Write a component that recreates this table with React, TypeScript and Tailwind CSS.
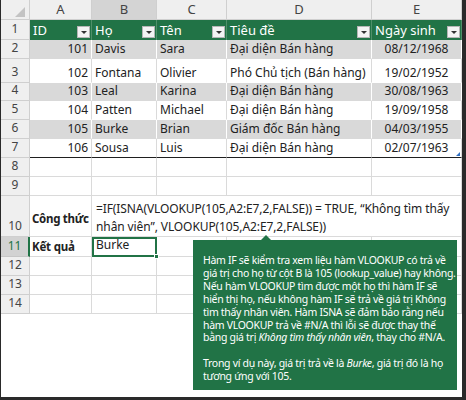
import React from 'react';

const COLS = ['w-[62px]', 'w-[65px]', 'w-[70px]', 'w-[145px]', 'w-[90px]'];
const LETTERS = ['A', 'B', 'C', 'D', 'E'];

const rows = [
  { n: 2, id: '101', ho: 'Davis', ten: 'Sara', td: 'Đại diện Bán hàng', ns: '08/12/1968', h: 'h-[19px]' },
  { n: 3, id: '102', ho: 'Fontana', ten: 'Olivier', td: 'Phó Chủ tịch (Bán hàng)', ns: '19/02/1952', h: 'h-[24px]' },
  { n: 4, id: '103', ho: 'Leal', ten: 'Karina', td: 'Đại diện Bán hàng', ns: '30/08/1963', h: 'h-[18px]' },
  { n: 5, id: '104', ho: 'Patten', ten: 'Michael', td: 'Đại diện Bán hàng', ns: '19/09/1958', h: 'h-[19px]' },
  { n: 6, id: '105', ho: 'Burke', ten: 'Brian', td: 'Giám đốc Bán hàng', ns: '04/03/1955', h: 'h-[19px]' },
  { n: 7, id: '106', ho: 'Sousa', ten: 'Luis', td: 'Đại diện Bán hàng', ns: '02/07/1963', h: 'h-[19px]' },
];

function RowHead({ n, h, active }: { n: number; h: string; active?: boolean }) {
  return (
    <div
      className={
        active
          ? `${h} w-[29px] shrink-0 flex items-end justify-center pb-[1px] bg-[#d2d2d2] text-[#217346] border-b border-[#c6c6c6] border-r-2 border-r-[#217346]`
          : `${h} w-[29px] shrink-0 flex items-end justify-center pb-[1px] bg-[#efefef] text-[#444] border-b border-r border-[#cfcfcf]`
      }
    >
      {n}
    </div>
  );
}

function Dropdown() {
  return (
    <span className="absolute right-[1px] top-[6px] w-[13px] h-[12px] bg-[#f3f3f3] border border-[#b5b5b5] flex items-center justify-center">
      <span className="w-0 h-0 border-l-[3px] border-r-[3px] border-t-[3px] border-l-transparent border-r-transparent border-t-[#333]" />
    </span>
  );
}

function EmptyRow({ n }: { n: number }) {
  return (
    <div className="flex h-[19px]">
      <RowHead n={n} h="h-[19px]" />
      {COLS.map((w, i) => (
        <div key={i} className={`${w} shrink-0 border-r border-b border-[#dadada]`} />
      ))}
    </div>
  );
}

export default function App() {
  return (
    <div className="relative w-[466px] h-[400px] bg-white border-l border-r-4 border-b-[3px] border-[#2a2a2a] overflow-hidden font-['Noto_Sans',sans-serif] text-[12px] text-[#222]">
      {/* column letters */}
      <div className="flex h-[20px]">
        <div className="relative w-[29px] shrink-0 bg-[#efefef] border-r border-b border-[#cfcfcf]">
          <span className="absolute right-[4px] bottom-[2px] w-0 h-0 border-l-[10px] border-b-[10px] border-l-transparent border-b-[#c3c3c3]" />
        </div>
        {COLS.map((w, i) => (
          <div
            key={i}
            className={`${w} shrink-0 flex items-center justify-center text-[13px] text-[#444] border-r border-b border-[#cfcfcf] ${i === 1 ? 'bg-[#d4d4d4]' : 'bg-[#efefef]'}`}
          >
            {LETTERS[i]}
          </div>
        ))}
      </div>

      {/* table header */}
      <div className="flex">
        <RowHead n={1} h="h-[20px]" />
        {['ID', 'Họ', 'Tên', 'Tiêu đề', 'Ngày sinh'].map((t, i) => (
          <div
            key={t}
            className={`${COLS[i]} relative shrink-0 h-[20px] bg-[#217346] text-white text-[13px] pl-[3px] flex items-end pb-[1px] border-r border-[#4f8f69] leading-[18px]`}
          >
            {t}
            <Dropdown />
          </div>
        ))}
      </div>

      {/* data rows */}
      {rows.map((r, idx) => {
        const band = idx % 2 === 0;
        const cell = `${r.h} shrink-0 flex items-end pb-[1px] px-[3px] leading-[16px] whitespace-nowrap border-r ${band ? 'bg-[#d9d9d9] border-white' : 'bg-white border-[#dadada]'} ${r.n === 7 ? 'border-b border-b-[#1f1f1f]' : band ? 'border-b border-b-[#d9d9d9]' : 'border-b border-b-white'}`;
        return (
          <div key={r.n} className="flex">
            <RowHead n={r.n} h={r.h} />
            <div className={`${cell} ${COLS[0]} justify-end`}>{r.id}</div>
            <div className={`${cell} ${COLS[1]}`}>{r.ho}</div>
            <div className={`${cell} ${COLS[2]}`}>{r.ten}</div>
            <div className={`${cell} ${COLS[3]}`}>{r.td}</div>
            <div className={`${cell} ${COLS[4]} relative justify-center`}>
              {r.ns}
              {r.n === 7 && (
                <span className="absolute right-[1px] bottom-[1px] w-0 h-0 border-l-[4px] border-b-[4px] border-l-transparent border-b-[#2f6fc1]" />
              )}
            </div>
          </div>
        );
      })}

      <EmptyRow n={8} />
      <EmptyRow n={9} />

      {/* formula row */}
      <div className="flex">
        <RowHead n={10} h="h-[41px]" />
        <div className={`${COLS[0]} shrink-0 h-[41px] flex items-end pb-[9px] pl-[2px] font-bold text-[11.5px] tracking-[-0.3px] whitespace-nowrap border-r border-b border-[#dadada]`}>
          Công thức
        </div>
        <div className="w-[370px] shrink-0 h-[41px] flex flex-col justify-end pl-[4px] text-[12px] leading-[18px] tracking-[-0.1px] whitespace-nowrap border-r border-b border-[#dadada]">
          <span>=IF(ISNA(VLOOKUP(105,A2:E7,2,FALSE)) = TRUE, “Không tìm thấy</span>
          <span>nhân viên”, VLOOKUP(105,A2:E7,2,FALSE))</span>
        </div>
      </div>

      {/* result row */}
      <div className="flex">
        <RowHead n={11} h="h-[20px]" active />
        <div className={`${COLS[0]} shrink-0 h-[20px] flex items-end pb-[1px] pl-[2px] font-bold text-[11.5px] tracking-[-0.2px] whitespace-nowrap border-r border-b border-[#dadada]`}>
          Kết quả
        </div>
        <div className={`${COLS[1]} relative shrink-0 h-[20px] flex items-end pb-[1px] pl-[2px] border-2 border-[#217346]`}>
          Burke
          <span className="absolute -right-[4px] -bottom-[4px] w-[5px] h-[5px] bg-[#217346] border border-white" />
        </div>
        <div className={`${COLS[2]} shrink-0 h-[20px] border-r border-b border-[#dadada]`} />
        <div className={`${COLS[3]} shrink-0 h-[20px] border-r border-b border-[#dadada]`} />
        <div className={`${COLS[4]} shrink-0 h-[20px] border-r border-b border-[#dadada]`} />
      </div>

      <EmptyRow n={12} />
      <EmptyRow n={13} />
      <EmptyRow n={14} />

      {/* callout */}
      <div className="absolute left-[192px] top-[240px] w-[264px] h-[150px] bg-[#217346] text-white text-[10.5px] leading-[12.9px] pl-[10px] pt-[14px] whitespace-nowrap tracking-[-0.3px]">
        <span className="absolute left-[68px] -top-[5px] w-0 h-0 border-l-[5px] border-r-[5px] border-b-[5px] border-l-transparent border-r-transparent border-b-[#217346]" />
        <div>Hàm IF sẽ kiểm tra xem liệu hàm VLOOKUP có trả về</div>
        <div>giá trị cho họ từ cột B là 105 (lookup_value) hay không.</div>
        <div>Nếu hàm VLOOKUP tìm được một họ thì hàm IF sẽ</div>
        <div>hiển thị họ, nếu không hàm IF sẽ trả về giá trị Không</div>
        <div>tìm thấy nhân viên. Hàm ISNA sẽ đảm bảo rằng nếu</div>
        <div>hàm VLOOKUP trả về #N/A thì lỗi sẽ được thay thế</div>
        <div>bằng giá trị <i>Không tìm thấy nhân viên</i>, thay cho #N/A.</div>
        <div>&nbsp;</div>
        <div>Trong ví dụ này, giá trị trả về là <i>Burke</i>, giá trị đó là họ</div>
        <div>tương ứng với 105.</div>
      </div>
    </div>
  );
}
